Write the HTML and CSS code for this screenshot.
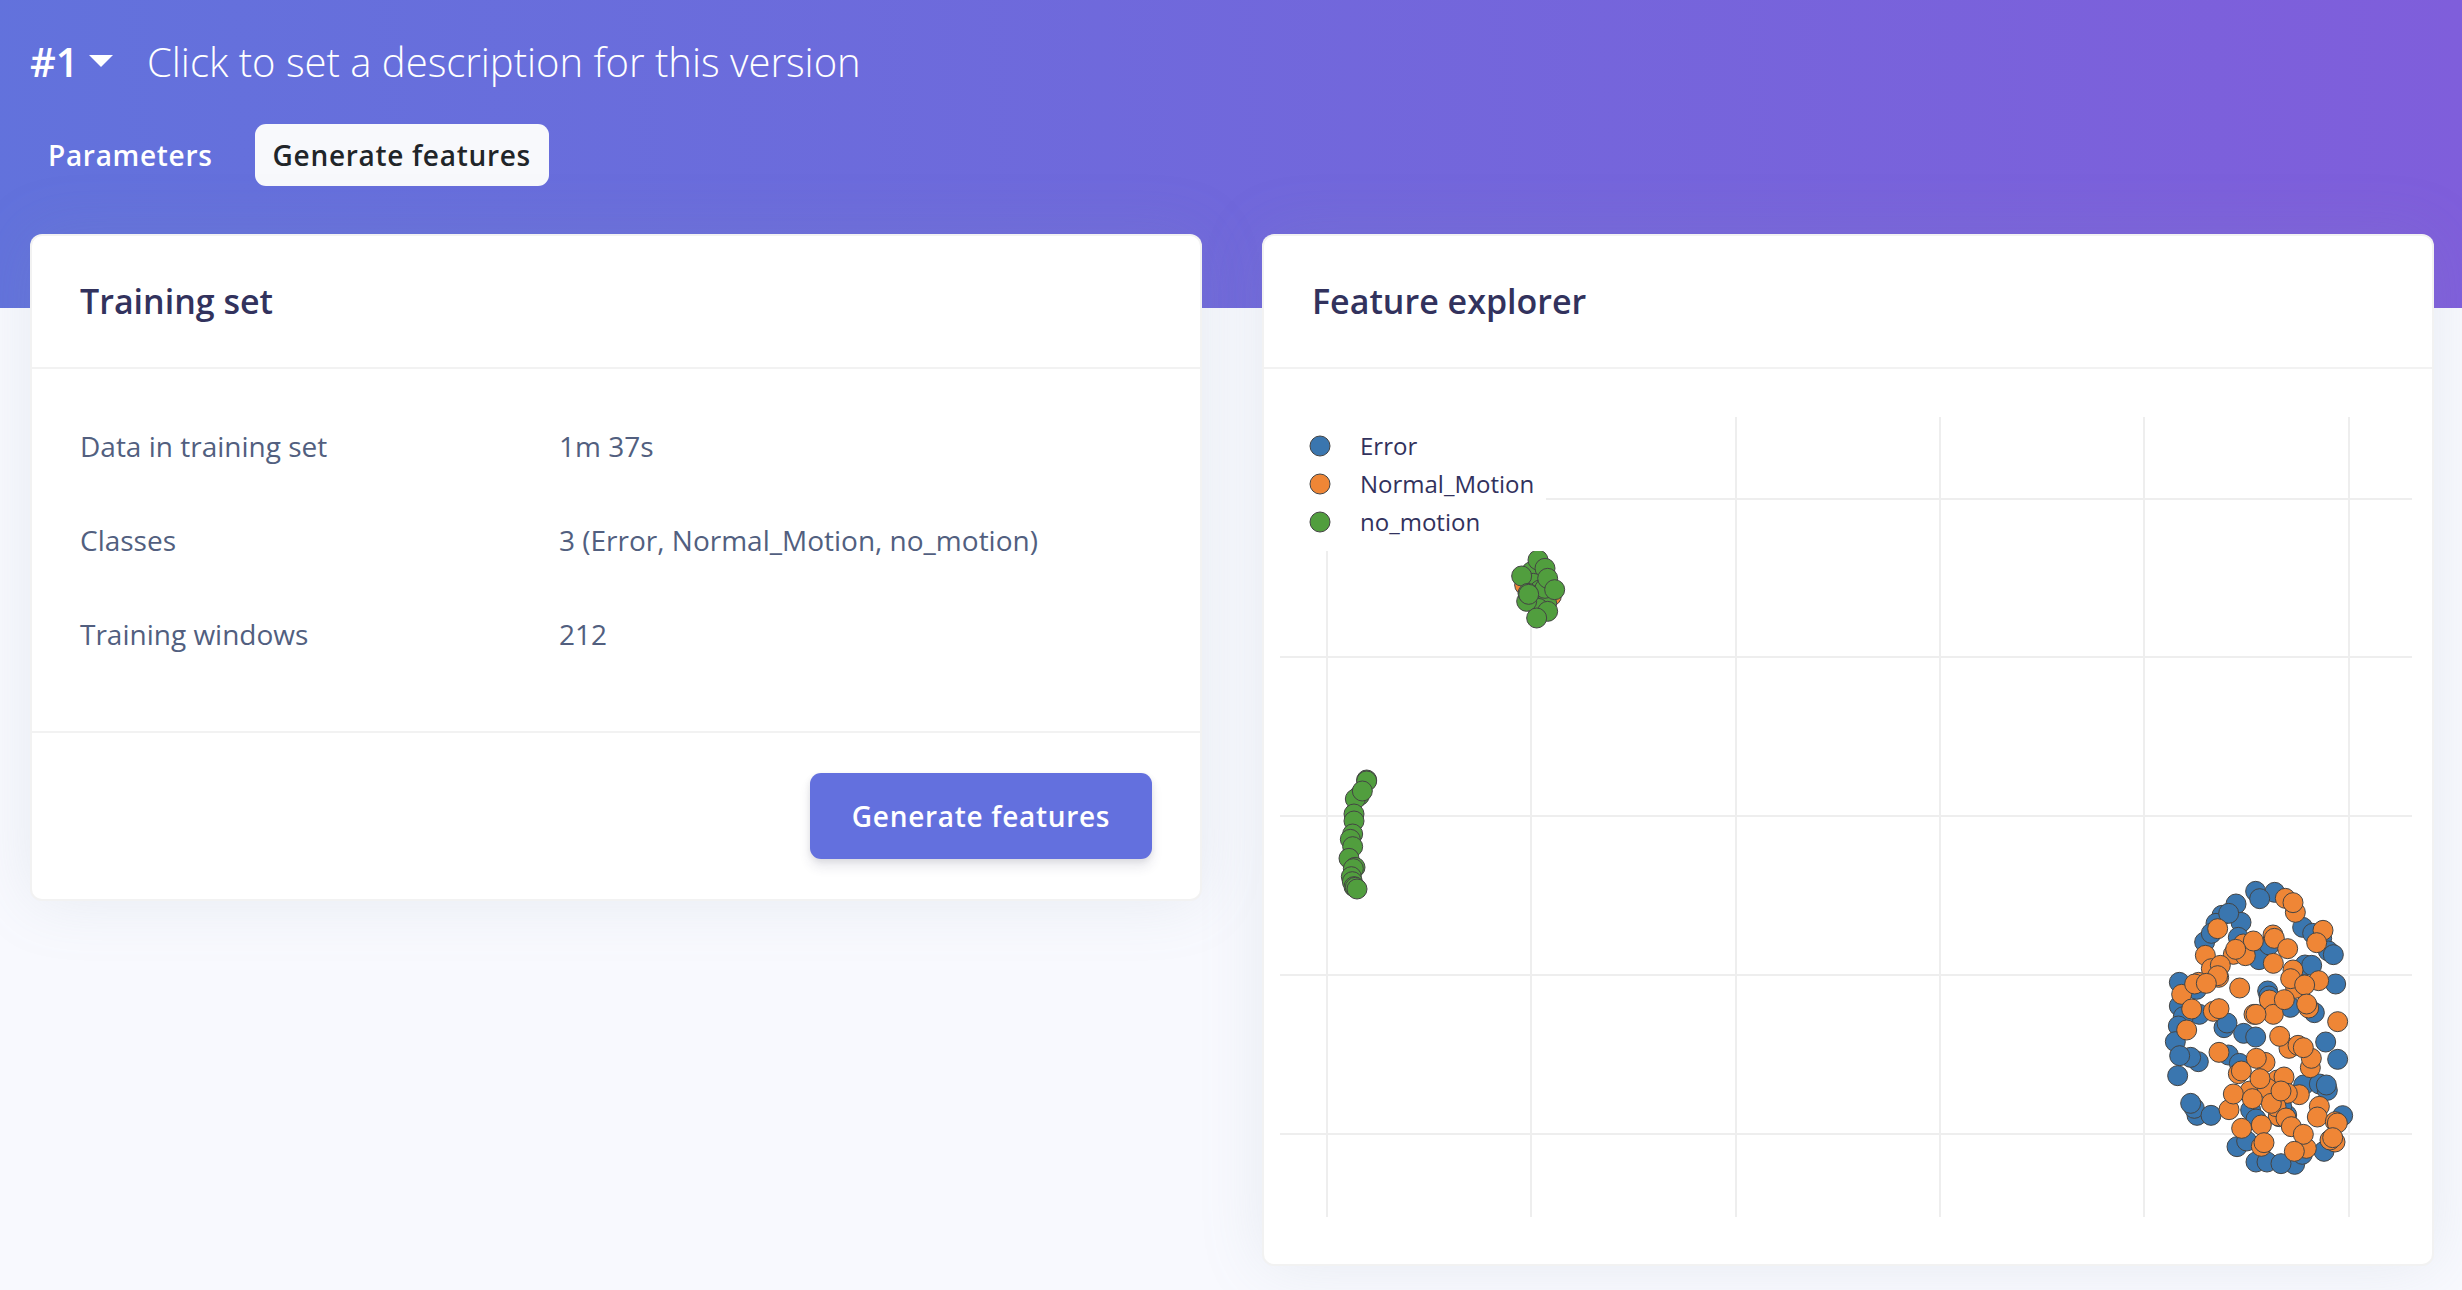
FILE: index.html
```html
<!DOCTYPE html>
<html lang="en">
<head>
<meta charset="utf-8">
<title>Generate features</title>
<link rel="stylesheet" href="styles.css">
</head>
<body>
<div class="page">
  <header class="hero">
    <div class="version">
      <span class="version-id">#1</span>
      <svg class="caret" width="24" height="12" viewBox="0 0 24 12"><path d="M0 0h24L12 12z" fill="#fff"/></svg>
      <span class="version-desc">Click to set a description for this version</span>
    </div>
    <nav class="tabs">
      <a class="tab">Parameters</a>
      <a class="tab tab-active">Generate features</a>
    </nav>
  </header>
  <main class="cards">
    <section class="card">
      <div class="card-header"><h2>Training set</h2></div>
      <dl class="details">
        <dt>Data in training set</dt><dd>1m 37s</dd>
        <dt>Classes</dt><dd>3 (Error, Normal_Motion, no_motion)</dd>
        <dt>Training windows</dt><dd>212</dd>
      </dl>
      <div class="card-footer"><button class="btn">Generate features</button></div>
    </section>
    <section class="card">
      <div class="card-header"><h2>Feature explorer</h2></div>
      <div class="explorer">
        <svg class="plot" width="1168" height="894" viewBox="1264 369 1168 894">
          <g class="grid">
            <path d="M1327 417V1217M1531 417V1217M1736 417V1217M1940 417V1217M2144 417V1217M2349 417V1217"/>
            <path d="M1280 499H2412M1280 657H2412M1280 816H2412M1280 975H2412M1280 1134H2412"/>
          </g>
          <g id="points"></g>
          <rect x="1278" y="415" width="268" height="136" fill="#fff"/>
          <g class="legend">
            <circle class="error" cx="1320" cy="446" r="10"/><text x="1360" y="455">Error</text>
            <circle class="normal" cx="1320" cy="484" r="10"/><text x="1360" y="493">Normal_Motion</text>
            <circle class="none" cx="1320" cy="522" r="10"/><text x="1360" y="531">no_motion</text>
          </g>
        </svg>
      </div>
    </section>
  </main>
</div>
<script src="points.js"></script>
</body>
</html>
```
FILE: styles.css
```css
* { box-sizing: border-box; }
body {
  margin: 0;
  background: #f8f9fe;
  font-family: "Open Sans", sans-serif;
  color: #525f7f;
}
.page { height: 1290px; overflow: hidden; }
.hero {
  height: 308px;
  padding: 32px 30px 0;
  background: linear-gradient(87deg, #6272dc 0, #7f5edb 100%);
  color: #fff;
}
.version { display: flex; align-items: center; height: 60px; line-height: 60px; }
.version-id { width: 59px; font-size: 40px; font-weight: 600; }
.caret { margin-top: -2px; }
.version-desc { margin-left: 34px; font-size: 40px; font-weight: 300; white-space: nowrap; }
.tabs { display: flex; gap: 24px; margin-top: 32px; }
.tab {
  height: 62px;
  padding: 0 18px;
  border-radius: 11px;
  font-size: 28px;
  font-weight: 600;
  line-height: 62px;
  letter-spacing: 0.7px;
  white-space: nowrap;
}
.tab-active { background: #f8f9fc; color: #212529; }
.cards {
  display: grid;
  grid-template-columns: 1172px 1172px;
  gap: 60px;
  align-items: start;
  margin-top: -74px;
  padding-left: 30px;
}
.card {
  border: 2px solid rgba(0, 0, 0, 0.05);
  border-radius: 12px;
  background: #fff;
  box-shadow: 0 0 64px rgba(136, 152, 170, 0.15);
}
.card-header { height: 133px; padding: 0 48px; border-bottom: 2px solid #f2f2f2; }
.card-header h2 {
  margin: 0;
  color: #32325d;
  font-size: 34px;
  font-weight: 600;
  line-height: 130px;
}
.details {
  display: grid;
  grid-template-columns: 479px 1fr;
  grid-auto-rows: 94px;
  margin: 0;
  height: 362px;
  padding: 30px 48px 0;
  font-size: 28px;
  line-height: 94px;
}
.details dd { margin: 0; }
.card-footer {
  display: flex;
  justify-content: flex-end;
  height: 168px;
  padding: 40px 48px 0;
  border-top: 2px solid #f2f2f2;
}
.btn {
  width: 342px;
  height: 86px;
  border: 0;
  border-radius: 11px;
  background: #6370de;
  box-shadow: 0 8px 12px rgba(50, 50, 93, 0.11), 0 2px 6px rgba(0, 0, 0, 0.08);
  color: #fff;
  font: 600 28px "Open Sans", sans-serif;
  letter-spacing: 0.7px;
}
.explorer { height: 895px; }
.plot { display: block; }
.grid { stroke: #eee; stroke-width: 2; }
circle { stroke: #444; stroke-width: 1; }
.error { fill: #3a76af; }
.normal { fill: #ef8636; }
.none { fill: #519e3e; }
.legend text { fill: #32325d; font-size: 24px; }
```
FILE: points.js
```js
// Each series: class name, group origin, then x,y pairs in thirds of a unit.
const series = [
  ["error", 2150, 870, "317,64 374,67 329,86 258,102 216,136 198,160 273,157 236,130 164,216 184,190 265,202 458,172 515,205 488,190 535,243 550,254 327,269 358,225 465,285 485,286 557,342 353,363 357,378 88,337 88,408 140,358 148,433 100,440 85,468 493,428 421,412 222,473 231,459 281,490 317,501 76,515 145,575 122,562 89,557 83,617 235,555 268,580 141,736 133,715 122,700 183,736 461,645 508,642 532,661 529,645 527,516 563,568 578,737 302,720 318,747 388,740 410,735 395,710 261,830 290,813 318,876 351,876 434,883 393,881 457,853 522,844"],
  ["normal", 2150, 870, "369,195 373,205 406,85 436,127 429,98 519,181 500,218 413,236 280,222 250,253 286,257 310,213 257,238 370,280 166,256 203,176 184,296 211,286 206,322 203,317 429,300 437,355 422,326 506,332 464,345 95,373 146,337 134,342 169,340 269,354 358,390 370,433 403,389 476,414 470,402 190,424 207,416 125,417 312,433 318,433 563,455 110,480 417,535 389,499 444,526 481,593 484,565 460,533 207,547 345,577 319,565 265,611 274,603 382,630 402,621 300,663 352,655 330,626 448,674 412,670 385,738 378,710 364,700 393,663 237,719 250,672 307,686 408,744 424,770 469,835 460,793 433,844 275,775 334,829 334,765 342,818 508,709 502,741 556,755 562,759 555,816 540,810 548,803"],
  ["normal", 1490, 530, "104,165 184,198"],
  ["none", 1490, 530, "125,125 144,90 165,115 130,160 150,180 170,220 165,175 173,145 95,138 194,179 145,235 110,214 114,190 173,244 116,193 140,264"],
  ["none", 1320, 750, "140,90 118,137 140,93 106,147 127,123 102,192 102,213 98,252 91,268 98,290 87,325 105,352 100,356 94,380 97,395 102,410 106,412 111,417"]
];
const group = document.getElementById("points");
for (const [name, ox, oy, list] of series) {
  for (const pair of list.split(" ")) {
    const [x, y] = pair.split(",").map(Number);
    const dot = document.createElementNS("http://www.w3.org/2000/svg", "circle");
    dot.setAttribute("class", name);
    dot.setAttribute("cx", ox + x / 3);
    dot.setAttribute("cy", oy + y / 3);
    dot.setAttribute("r", 10);
    group.append(dot);
  }
}
```
